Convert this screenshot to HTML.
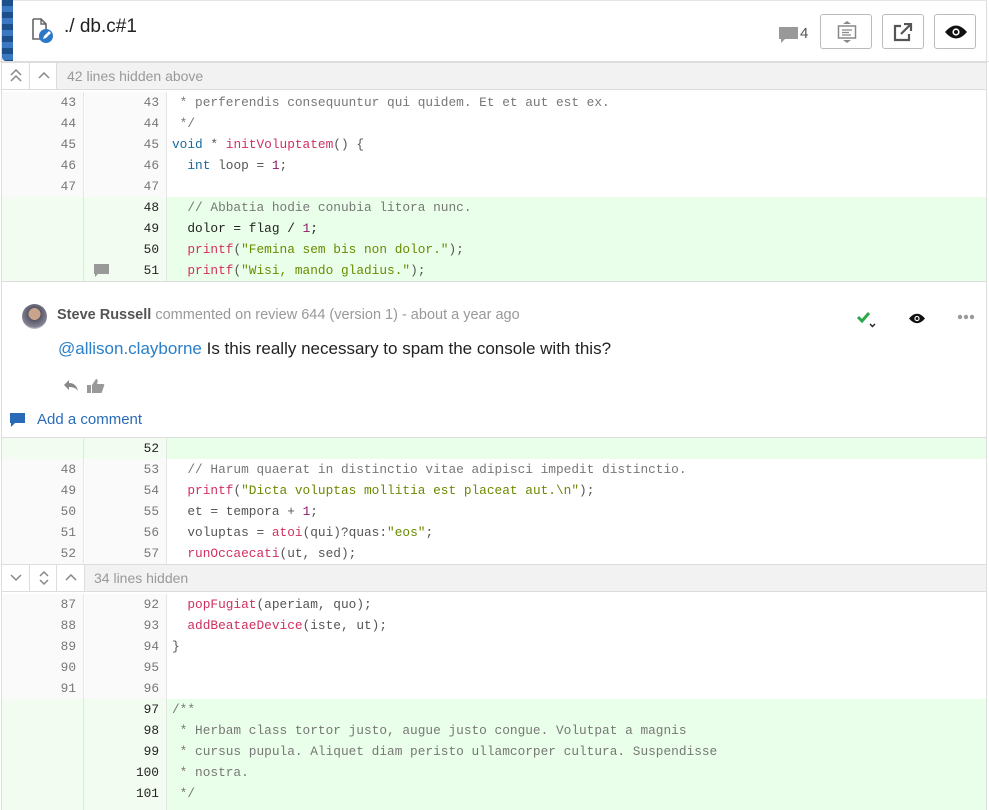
<!DOCTYPE html>
<html style="height:810px;overflow:hidden"><head><meta charset="utf-8"><style>
*{margin:0;padding:0;box-sizing:border-box}
body{width:989px;height:810px;background:#fff;font-family:"Liberation Sans",sans-serif;overflow:hidden;position:relative}
.frame{position:absolute;left:1px;top:0;width:986px;height:810px;border-left:1px solid #ddd;border-right:1px solid #ddd;border-top:1px solid #e5e5e5}
.stripe{position:absolute;left:2px;top:0;width:11px;height:61px;background:repeating-linear-gradient(#1d4f8a 0 6px,#3a78c2 6px 12px);border-radius:0 0 0 4px}
.hdr{position:absolute;left:0;top:0;width:989px;height:62px;border-bottom:1px solid #ddd}
.title{position:absolute;left:64px;top:17px;font-size:18px;color:#222}
.btn{position:absolute;top:14px;height:35px;border:1px solid #bbb;border-radius:3px;background:#fff}
.row{position:absolute;left:2px;width:984px;height:21px;font-family:"Liberation Mono",monospace;font-size:12.8px;line-height:21px}
.n1,.n2{position:absolute;top:0;height:21px;text-align:right;color:#777;background:#fafafa}
.n1{left:0;width:82px;padding-right:7px;border-right:1px solid #e5e5e5}
.n2{left:83px;width:82px;padding-right:7px;border-right:1px solid #e5e5e5}
.code{position:absolute;left:170px;top:0;white-space:pre;color:#555}
.add .n1,.add .n2{background:#f3fcf1;color:#222}
.add{background:#eaffea}
.bar{position:absolute;left:2px;width:984px;height:28px;background:#f2f2f2;border-top:1px solid #ddd;border-bottom:1px solid #ddd;font-size:14px;color:#999;line-height:26px}
.k{color:#1a6a9e}.f{color:#d03060}.s{color:#6a8a00}.d{color:#8a1a6a}.c{color:#777}
.cell{position:absolute;top:0;height:26px;border-right:1px solid #ddd;background:#fff}
</style></head><body>
<div class="frame"></div>
<div class="hdr"></div>
<div class="stripe"></div>
<svg style="position:absolute;left:31px;top:18px" width="24" height="26" viewBox="0 0 24 26"><path d="M2 1h8l5 5v8" fill="none" stroke="#666" stroke-width="1.6"/><path d="M2 1v20h7" fill="none" stroke="#666" stroke-width="1.6"/><path d="M10 1v5h5" fill="none" stroke="#666" stroke-width="1.4"/><circle cx="15" cy="18" r="7" fill="#2c78c8"/><path d="M12 21l1-3 5-5 2 2-5 5z" fill="#fff"/></svg>
<div class="title" style="font-size:19px;top:16px">./ db.c#1</div>
<svg style="position:absolute;left:779px;top:27px" width="20" height="18" viewBox="0 0 20 18"><path d="M0 0h19v12H6l-4 4v-4H0z" fill="#999"/></svg>
<div style="position:absolute;left:800px;top:25px;font-size:15px;color:#555">4</div>
<div class="btn" style="left:820px;width:52px"><svg style="position:absolute;left:16px;top:6px" width="20" height="22" viewBox="0 0 20 22"><path d="M10 0l4 3H6z M10 22l4-3H6z" fill="#888"/><rect x="1.5" y="5" width="17" height="12" fill="none" stroke="#888" stroke-width="1.5"/><path d="M5 9h10M5 11.5h7M5 14h9" stroke="#888" stroke-width="1.3"/></svg></div>
<div class="btn" style="left:882px;width:42px"><svg style="position:absolute;left:10px;top:8px" width="20" height="19" viewBox="0 0 20 19"><path d="M8 3H2v14h14v-6" fill="none" stroke="#555" stroke-width="2.2"/><path d="M8 11L17 2M11 1h7v7" fill="none" stroke="#555" stroke-width="2.2"/></svg></div>
<div class="btn" style="left:934px;width:42px"><svg style="position:absolute;left:10px;top:10px" width="22" height="14" viewBox="0 0 22 14"><path d="M0 7Q11-6 22 7Q11 20 0 7z" fill="#111"/><circle cx="11" cy="7" r="3.6" fill="#fff"/><circle cx="11" cy="7" r="2" fill="#111"/></svg></div>

<div class="bar" style="top:62px"><div class="cell" style="left:0;width:28px;"><svg style="position:absolute;left:8px;top:6px" width="12" height="14" viewBox="0 0 12 14"><path d="M1 6l5-5 5 5M1 12l5-5 5 5" fill="none" stroke="#888" stroke-width="1.5"/></svg></div><div class="cell" style="left:28px;width:27px"><svg style="position:absolute;left:8px;top:9px" width="12" height="8" viewBox="0 0 12 8"><path d="M1 6l5-5 5 5" fill="none" stroke="#888" stroke-width="1.5"/></svg></div><span style="position:absolute;left:65px">42 lines hidden above</span></div>

<div class="row" style="top:92px"><div class="n1">43</div><div class="n2">43</div><div class="code c"> * perferendis consequuntur qui quidem. Et et aut est ex.</div></div>
<div class="row" style="top:113px"><div class="n1">44</div><div class="n2">44</div><div class="code c"> */</div></div>
<div class="row" style="top:134px"><div class="n1">45</div><div class="n2">45</div><div class="code"><span class="k">void</span> * <span class="f">initVoluptatem</span>() {</div></div>
<div class="row" style="top:155px"><div class="n1">46</div><div class="n2">46</div><div class="code">  <span class="k">int</span> loop = <span class="d">1</span>;</div></div>
<div class="row" style="top:176px"><div class="n1">47</div><div class="n2">47</div><div class="code"></div></div>
<div class="row add" style="top:197px"><div class="n1"></div><div class="n2">48</div><div class="code c">  // Abbatia hodie conubia litora nunc.</div></div>
<div class="row add" style="top:218px"><div class="n1"></div><div class="n2">49</div><div class="code" style="color:#222">  dolor = flag / <span class="d">1</span>;</div></div>
<div class="row add" style="top:239px"><div class="n1"></div><div class="n2">50</div><div class="code">  <span class="f">printf</span>(<span class="s">"Femina sem bis non dolor."</span>);</div></div>
<div class="row add" style="top:260px"><div class="n1"></div><div class="n2">51<svg style="position:absolute;left:9px;top:4px" width="15" height="14" viewBox="0 0 15 14"><path d="M0 0h15v10H4l-3 3v-3H0z" fill="#999"/></svg></div><div class="code">  <span class="f">printf</span>(<span class="s">"Wisi, mando gladius."</span>);</div></div>

<div style="position:absolute;left:2px;top:281px;width:984px;height:157px;background:#fff;border-top:1px solid #ddd;border-bottom:1px solid #ddd">
<div style="position:absolute;left:20px;top:22px;width:25px;height:25px;border-radius:50%;background:radial-gradient(circle at 50% 40%,#c9a48a 0 30%,#556 31%,#889 70%,#bbb 71%)"></div>
<div style="position:absolute;left:55px;top:25px;font-size:14.5px;color:#999"><b style="color:#555">Steve Russell</b> commented on review 644 (version 1) - about a year ago</div>
<div style="position:absolute;left:56px;top:57px;font-size:17px;color:#222"><span style="color:#2a7fc8">@allison.clayborne</span> Is this really necessary to spam the console with this?</div>
<svg style="position:absolute;left:61px;top:97px" width="16" height="13" viewBox="0 0 16 13"><path d="M6 1L1 6l5 5V8c4 0 7 1 9 4-1-5-4-8-9-8z" fill="#888"/></svg>
<svg style="position:absolute;left:85px;top:96px" width="18" height="16" viewBox="0 0 18 16"><rect x="0" y="7" width="4" height="8" fill="#999"/><path d="M5 7l4-6c2 0 2 2 1 5h6c1 0 2 1 1 2l-2 6c0 1-1 1-2 1H5z" fill="#999"/></svg>
<svg style="position:absolute;left:8px;top:131px" width="16" height="15" viewBox="0 0 16 15"><path d="M0 0h15v10H5l-4 4v-4H0z" fill="#2a6bb8"/></svg>
<div style="position:absolute;left:35px;top:129px;font-size:15px;color:#2a6bb8">Add a comment</div>
<svg style="position:absolute;left:854px;top:29px" width="22" height="20" viewBox="0 0 22 20"><path d="M2 6l4 4 7-8" fill="none" stroke="#2ea84a" stroke-width="3"/><path d="M14 13l2.5 2.5L19 13" fill="none" stroke="#222" stroke-width="1.4"/></svg>
<svg style="position:absolute;left:907px;top:31px" width="16" height="11" viewBox="0 0 22 14"><path d="M0 7Q11-6 22 7Q11 20 0 7z" fill="#111"/><circle cx="11" cy="7" r="3.6" fill="#fff"/><circle cx="11" cy="7" r="2" fill="#111"/></svg>
<svg style="position:absolute;left:955px;top:32px" width="18" height="6" viewBox="0 0 18 6"><circle cx="3" cy="3" r="2.2" fill="#999"/><circle cx="9" cy="3" r="2.2" fill="#999"/><circle cx="15" cy="3" r="2.2" fill="#999"/></svg>
</div>

<div class="row add" style="top:438px"><div class="n1"></div><div class="n2">52</div><div class="code"></div></div>
<div class="row" style="top:459px"><div class="n1">48</div><div class="n2">53</div><div class="code c">  // Harum quaerat in distinctio vitae adipisci impedit distinctio.</div></div>
<div class="row" style="top:480px"><div class="n1">49</div><div class="n2">54</div><div class="code">  <span class="f">printf</span>(<span class="s">"Dicta voluptas mollitia est placeat aut.\n"</span>);</div></div>
<div class="row" style="top:501px"><div class="n1">50</div><div class="n2">55</div><div class="code">  et = tempora + <span class="d">1</span>;</div></div>
<div class="row" style="top:522px"><div class="n1">51</div><div class="n2">56</div><div class="code">  voluptas = <span class="f">atoi</span>(qui)?quas:<span class="s">"eos"</span>;</div></div>
<div class="row" style="top:543px"><div class="n1">52</div><div class="n2">57</div><div class="code">  <span class="f">runOccaecati</span>(ut, sed);</div></div>

<div class="bar" style="top:564px"><div class="cell" style="left:0;width:28px"><svg style="position:absolute;left:8px;top:9px" width="12" height="8" viewBox="0 0 12 8"><path d="M1 1l5 5 5-5" fill="none" stroke="#888" stroke-width="1.5"/></svg></div><div class="cell" style="left:28px;width:27px"><svg style="position:absolute;left:8px;top:5px" width="12" height="16" viewBox="0 0 12 16"><path d="M2 6l4-4 4 4M2 10l4 4 4-4" fill="none" stroke="#888" stroke-width="1.5"/></svg></div><div class="cell" style="left:55px;width:28px"><svg style="position:absolute;left:8px;top:9px" width="12" height="8" viewBox="0 0 12 8"><path d="M1 6l5-5 5 5" fill="none" stroke="#888" stroke-width="1.5"/></svg></div><span style="position:absolute;left:92px">34 lines hidden</span></div>

<div class="row" style="top:594px"><div class="n1">87</div><div class="n2">92</div><div class="code">  <span class="f">popFugiat</span>(aperiam, quo);</div></div>
<div class="row" style="top:615px"><div class="n1">88</div><div class="n2">93</div><div class="code">  <span class="f">addBeataeDevice</span>(iste, ut);</div></div>
<div class="row" style="top:636px"><div class="n1">89</div><div class="n2">94</div><div class="code">}</div></div>
<div class="row" style="top:657px"><div class="n1">90</div><div class="n2">95</div><div class="code"></div></div>
<div class="row" style="top:678px"><div class="n1">91</div><div class="n2">96</div><div class="code"></div></div>
<div class="row add" style="top:699px"><div class="n1"></div><div class="n2">97</div><div class="code c">/**</div></div>
<div class="row add" style="top:720px"><div class="n1"></div><div class="n2">98</div><div class="code c"> * Herbam class tortor justo, augue justo congue. Volutpat a magnis</div></div>
<div class="row add" style="top:741px"><div class="n1"></div><div class="n2">99</div><div class="code c"> * cursus pupula. Aliquet diam peristo ullamcorper cultura. Suspendisse</div></div>
<div class="row add" style="top:762px"><div class="n1"></div><div class="n2">100</div><div class="code c"> * nostra.</div></div>
<div class="row add" style="top:783px;height:27px"><div class="n1" style="height:27px"></div><div class="n2" style="height:27px">101</div><div class="code c"> */</div></div>
</body></html>
